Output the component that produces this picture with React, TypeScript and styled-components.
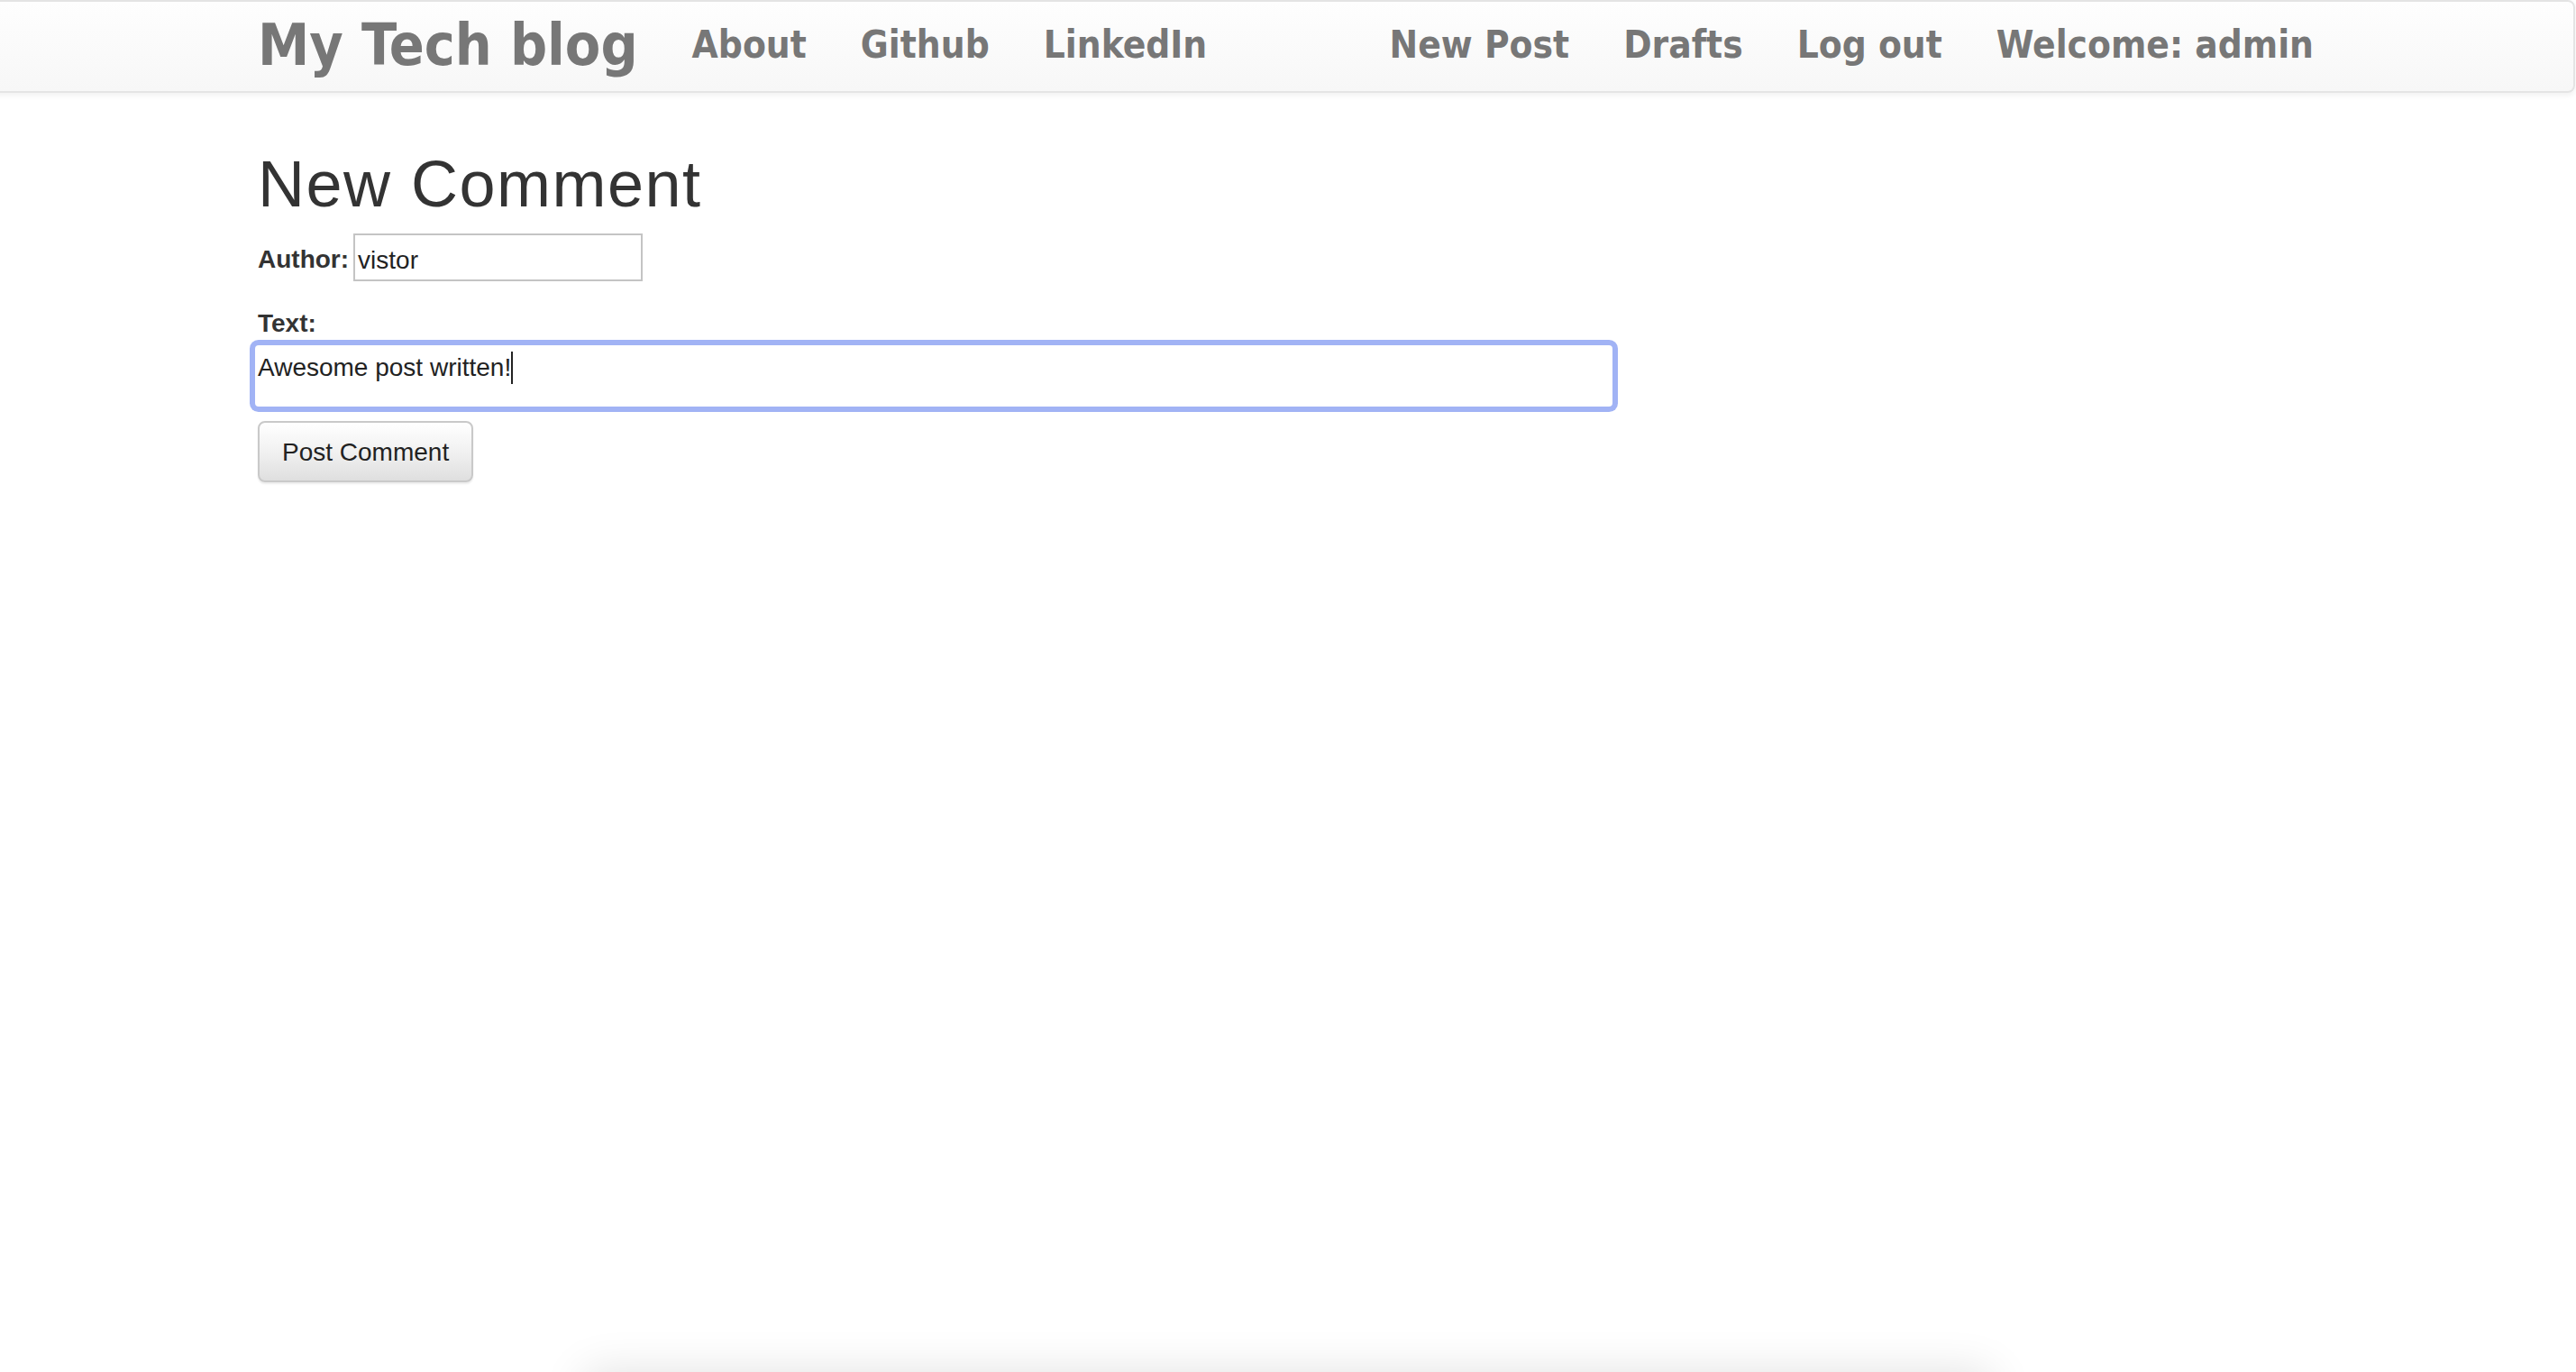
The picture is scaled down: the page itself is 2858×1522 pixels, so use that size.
import React from "react";
import styled, { createGlobalStyle } from "styled-components";

const GlobalStyle = createGlobalStyle`
  html, body {
    margin: 0;
    padding: 0;
    background: #fff;
  }
  body {
    font-family: "Liberation Sans", Arial, sans-serif;
    font-size: 28px;
    line-height: 40px;
    color: #333;
  }
  * {
    box-sizing: border-box;
  }
`;

const Page = styled.div`
  min-height: 1522px;
  overflow: hidden;
`;

const Navbar = styled.nav`
  height: 103px;
  margin: 0 1px 0 -10px;
  border: 2px solid #e4e4e4;
  border-radius: 8px;
  background: linear-gradient(to bottom, #fefefe 0%, #f7f7f7 100%);
  box-shadow: 0 3px 6px rgba(0, 0, 0, 0.06);
  display: flex;
  align-items: center;
  justify-content: space-between;
  padding: 0 258px 3px 294px;
  font-family: "DejaVu Sans Condensed", "DejaVu Sans", sans-serif;
  font-stretch: condensed;
  font-weight: bold;
  color: #777;
`;

const NavGroup = styled.ul`
  display: flex;
  align-items: center;
  list-style: none;
  margin: 0;
  padding: 0;
`;

const Brand = styled.a`
  font-size: 64px;
  line-height: 72px;
  padding-right: 30px;
  color: #777;
  text-decoration: none;
`;

const NavLink = styled.a`
  display: block;
  font-size: 42px;
  line-height: 50px;
  padding: 0 30px;
  color: #777;
  text-decoration: none;
`;

const Container = styled.main`
  padding-left: 286px;
`;

const Title = styled.h1`
  font-size: 72px;
  line-height: 79px;
  font-weight: normal;
  letter-spacing: 1.5px;
  margin: 62px 0 15px;
  color: #333;
`;

const FieldRow = styled.div`
  display: flex;
  align-items: center;
  height: 53px;
`;

const Label = styled.label<{ block?: boolean }>`
  display: ${(p) => (p.block ? "block" : "inline-block")};
  font-weight: bold;
  margin-right: ${(p) => (p.block ? 0 : 5)}px;
`;

const InlineLabel = styled(Label)`
  padding-top: 5px;
`;

const TextLabel = styled(Label)`
  margin-top: 27px;
  margin-bottom: 4px;
`;

const TextInput = styled.div`
  width: 321px;
  height: 53px;
  border: 2px solid #c4c4c4;
  padding: 7px 3px 0;
  line-height: 41px;
  background: #fff;
  color: #222;
`;

const TextArea = styled.div`
  width: 1506px;
  height: 68px;
  margin-left: -3px;
  border-radius: 4px;
  box-shadow: 0 0 0 6px #a1b3f5;
  padding: 5px 3px 0;
  color: #222;
  display: flex;
  align-items: flex-start;
`;

const Caret = styled.span`
  display: inline-block;
  width: 2px;
  height: 36px;
  margin-top: 2px;
  background: #222;
`;

const Button = styled.button`
  margin-top: 16px;
  height: 68px;
  padding: 2px 25px 0;
  border: 2px solid #c9c9c9;
  border-radius: 8px;
  background: linear-gradient(to bottom, #ffffff 0%, #f1f1f1 50%, #dfdfdf 100%);
  box-shadow: 0 2px 2px rgba(0, 0, 0, 0.08);
  font-family: "Liberation Sans", Arial, sans-serif;
  font-size: 28px;
  color: #222;
`;

const Footer = styled.footer`
  width: 1560px;
  height: 60px;
  margin: 0 auto;
  background: #fff;
  box-shadow: 0 0 50px rgba(0, 0, 0, 0.12);
`;

export default function App() {
  return (
    <>
      <GlobalStyle />
      <Page>
        <Navbar>
          <NavGroup>
            <li>
              <Brand href="#">My Tech blog</Brand>
            </li>
            <li>
              <NavLink href="#">About</NavLink>
            </li>
            <li>
              <NavLink href="#">Github</NavLink>
            </li>
            <li>
              <NavLink href="#">LinkedIn</NavLink>
            </li>
          </NavGroup>
          <NavGroup>
            <li>
              <NavLink href="#">New Post</NavLink>
            </li>
            <li>
              <NavLink href="#">Drafts</NavLink>
            </li>
            <li>
              <NavLink href="#">Log out</NavLink>
            </li>
            <li>
              <NavLink href="#">Welcome: admin</NavLink>
            </li>
          </NavGroup>
        </Navbar>
        <Container>
          <Title>New Comment</Title>
          <FieldRow>
            <InlineLabel>Author:</InlineLabel>
            <TextInput>vistor</TextInput>
          </FieldRow>
          <TextLabel block>Text:</TextLabel>
          <TextArea>
            Awesome post written!
            <Caret />
          </TextArea>
          <Button>Post Comment</Button>
        </Container>
      </Page>
      <Footer />
    </>
  );
}
